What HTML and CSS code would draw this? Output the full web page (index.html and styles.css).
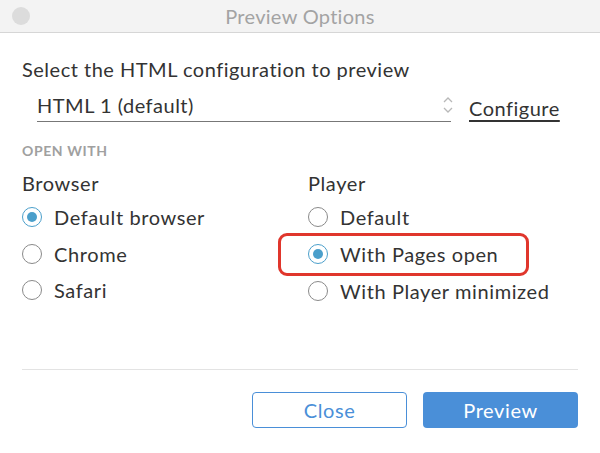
FILE: index.html
```html
<!DOCTYPE html>
<html lang="en">
<head>
  <meta charset="UTF-8" />
  <title>Preview Options</title>
  <link rel="stylesheet" href="styles.css">
</head>
<body>
  <div class="window">
    <div class="titlebar">
      <span class="close-dot"></span>
      <span class="title">Preview Options</span>
    </div>

    <div class="content">
      <p class="prompt">Select the HTML configuration to preview</p>
      <div class="config-row">
        <div class="select">
          <span>HTML 1 (default)</span>
          <svg class="chevrons" width="10" height="18" viewBox="0 0 10 18">
            <path d="M1 6 L5 2 L9 6" fill="none" stroke="#b8b8b8" stroke-width="1.3" />
            <path d="M1 12 L5 16 L9 12" fill="none" stroke="#b8b8b8" stroke-width="1.3" />
          </svg>
        </div>
        <a class="configure" href="#">Configure</a>
      </div>

      <div class="section-label">OPEN WITH</div>

      <div class="columns">
        <div class="group">
          <div class="group-title">Browser</div>
          <div class="option"><span class="radio checked"></span>Default browser</div>
          <div class="option"><span class="radio"></span>Chrome</div>
          <div class="option"><span class="radio"></span>Safari</div>
        </div>
        <div class="group">
          <div class="group-title">Player</div>
          <div class="option"><span class="radio"></span>Default</div>
          <div class="option highlighted"><span class="radio checked"></span>With Pages open</div>
          <div class="option"><span class="radio"></span>With Player minimized</div>
        </div>
      </div>

      <div class="divider"></div>

      <div class="buttons">
        <button class="btn btn-outline">Close</button>
        <button class="btn btn-primary">Preview</button>
      </div>
    </div>
  </div>
</body>
</html>
```

FILE: styles.css
```css
body {
  margin: 0;
  padding: 0;
  font-family: Lato, "Open Sans", sans-serif;
  background: #fff;
  color: #333;
}

.window {
  width: 600px;
  height: 453px;
  overflow: hidden;
}

.titlebar {
  position: relative;
  height: 32px;
  background: #f3f3f3;
  border-bottom: 1px solid #d6d6d6;
  display: flex;
  align-items: center;
  justify-content: center;
}

.close-dot {
  position: absolute;
  left: 12px;
  top: 7px;
  width: 18px;
  height: 18px;
  border-radius: 50%;
  background: #dcdcdc;
}

.title {
  font-size: 20px;
  letter-spacing: 0.3px;
  color: #a3a3a3;
}

.content {
  padding: 0 22px;
}

.prompt {
  margin: 22px 0 0;
  font-size: 20px;
  letter-spacing: 0.5px;
  line-height: 28px;
}

.config-row {
  display: flex;
  align-items: flex-end;
  margin-top: 6px;
}

.select {
  margin-left: 15px;
  width: 414px;
  height: 33px;
  border-bottom: 1.5px solid #777;
  display: flex;
  align-items: center;
  justify-content: space-between;
  font-size: 20px;
  letter-spacing: 0.5px;
  box-sizing: border-box;
}

.chevrons {
  margin-right: -2px;
}

.configure {
  margin-left: 18px;
  margin-bottom: 2px;
  font-size: 20px;
  letter-spacing: 0.5px;
  color: #333;
  text-decoration: underline;
  text-underline-offset: 4px;
  text-decoration-thickness: 1.5px;
}

.section-label {
  margin-top: 20px;
  font-size: 14px;
  font-weight: bold;
  color: #a0a0a0;
  letter-spacing: 0.6px;
}

.columns {
  display: grid;
  grid-template-columns: 286px 1fr;
  margin-top: 12px;
}

.group-title {
  font-size: 20px;
  letter-spacing: 0.6px;
  line-height: 24px;
  margin-bottom: 4px;
}

.option {
  display: flex;
  align-items: center;
  height: 36.5px;
  font-size: 20px;
  letter-spacing: 0.6px;
  gap: 12px;
}

.option.highlighted {
  box-sizing: border-box;
  outline: 3px solid #e0362c;
  border-radius: 6px;
  margin-left: -27px;
  padding-left: 27px;
  width: 245px;
  height: 37px;
}

.radio {
  flex-shrink: 0;
  width: 20px;
  height: 20px;
  box-sizing: border-box;
  border: 1.5px solid #8a8a8a;
  border-radius: 50%;
  display: flex;
  align-items: center;
  justify-content: center;
}

.radio.checked {
  border-color: #4b9fcb;
}

.radio.checked::after {
  content: "";
  width: 10px;
  height: 10px;
  border-radius: 50%;
  background: #4b9fcb;
}

.divider {
  margin-top: 60px;
  height: 1px;
  background: #e3e3e3;
}

.buttons {
  display: flex;
  justify-content: flex-end;
  gap: 16px;
  margin-top: 22px;
}

.btn {
  width: 155px;
  height: 36px;
  border-radius: 4px;
  font-family: Lato, "Open Sans", sans-serif;
  font-size: 20px;
  letter-spacing: 0.6px;
  cursor: pointer;
}

.btn-outline {
  background: #fff;
  border: 1.5px solid #4a8fd8;
  color: #4a8fd8;
}

.btn-primary {
  background: #4a8fd8;
  border: none;
  color: #fff;
}
```
